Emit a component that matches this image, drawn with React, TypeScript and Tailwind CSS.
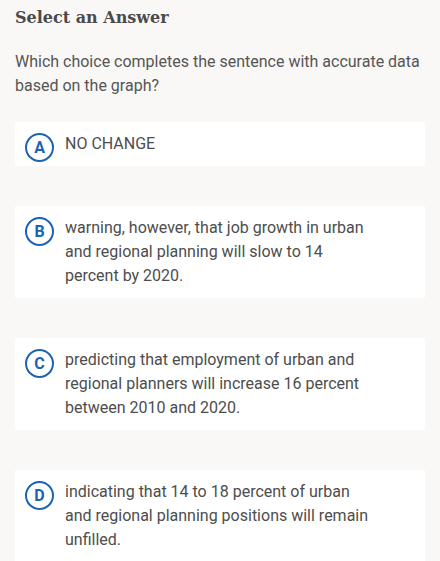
import React from "react";

const choices = [
  { letter: "A", text: "NO CHANGE" },
  {
    letter: "B",
    text: "warning, however, that job growth in urban and regional planning will slow to 14 percent by 2020.",
  },
  {
    letter: "C",
    text: "predicting that employment of urban and regional planners will increase 16 percent between 2010 and 2020.",
  },
  {
    letter: "D",
    text: "indicating that 14 to 18 percent of urban and regional planning positions will remain unfilled.",
  },
];

export default function App() {
  return (
    <div
      className="min-h-[561px] w-[440px] bg-[#f9f8f7] px-[15px] pt-[5px] text-[#4d4d4d]"
      style={{ fontFamily: "Roboto, 'Liberation Sans', sans-serif" }}
    >
      <h1
        className="text-[16px] font-bold leading-[26px] text-[#4a4a4a]"
        style={{ fontFamily: "'DejaVu Serif', serif" }}
      >
        Select an Answer
      </h1>
      <p className="mt-[19px] text-[16px] leading-[24px] text-[#555555]">
        Which choice completes the sentence with accurate data based on the graph?
      </p>
      <div className="mt-[24px] flex flex-col gap-[40px]">
        {choices.map((c) => (
          <div key={c.letter} className="flex items-start bg-white px-[10px] py-[10px]">
            <div className="mt-[1px] mb-[-6px] flex h-[29px] w-[29px] shrink-0 items-center justify-center rounded-full border-2 border-[#1d63b3] text-[16px] font-bold leading-none text-[#1d63b3]">
              {c.letter}
            </div>
            <div className="ml-[11px] max-w-[310px] text-[16px] leading-[24px] text-[#4d4d4d]">
              {c.text}
            </div>
          </div>
        ))}
      </div>
    </div>
  );
}
